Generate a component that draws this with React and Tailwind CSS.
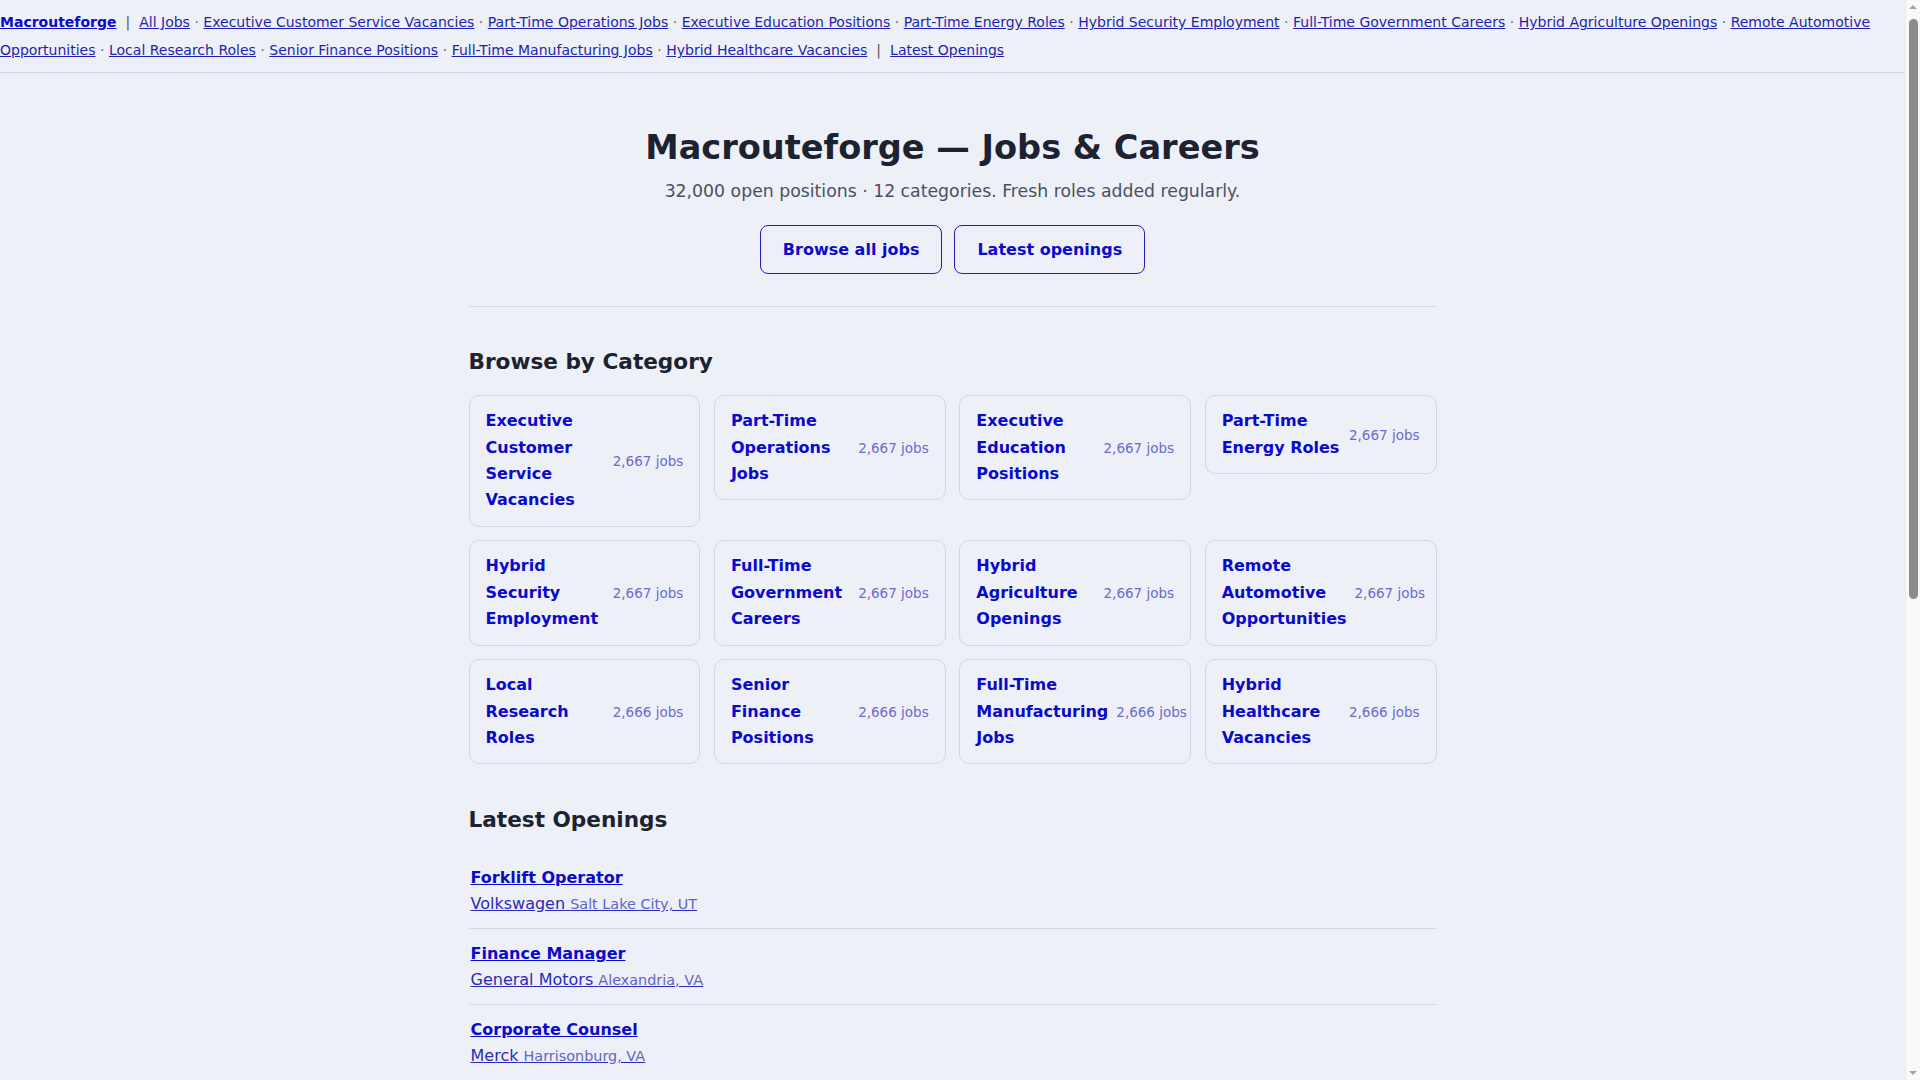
const CATEGORIES = [
  { name: "Executive Customer Service Vacancies", count: "2,667" },
  { name: "Part-Time Operations Jobs", count: "2,667" },
  { name: "Executive Education Positions", count: "2,667" },
  { name: "Part-Time Energy Roles", count: "2,667" },
  { name: "Hybrid Security Employment", count: "2,667" },
  { name: "Full-Time Government Careers", count: "2,667" },
  { name: "Hybrid Agriculture Openings", count: "2,667" },
  { name: "Remote Automotive Opportunities", count: "2,667" },
  { name: "Local Research Roles", count: "2,666" },
  { name: "Senior Finance Positions", count: "2,666" },
  { name: "Full-Time Manufacturing Jobs", count: "2,666" },
  { name: "Hybrid Healthcare Vacancies", count: "2,666" },
];

const JOBS = [
  { title: "Forklift Operator", company: "Volkswagen", place: "Salt Lake City, UT" },
  { title: "Finance Manager", company: "General Motors", place: "Alexandria, VA" },
  { title: "Corporate Counsel", company: "Merck", place: "Harrisonburg, VA" },
  { title: "Registered Nurse", company: "Kaiser Permanente", place: "Fresno, CA" },
  { title: "Data Analyst", company: "Deloitte", place: "Austin, TX" },
  { title: "Warehouse Associate", company: "Amazon", place: "Reno, NV" },
  { title: "HR Coordinator", company: "Pfizer", place: "Raleigh, NC" },
  { title: "Software Engineer", company: "Intel", place: "Hillsboro, OR" },
  { title: "Customer Service Representative", company: "Comcast", place: "Denver, CO" },
  { title: "Maintenance Technician", company: "Boeing", place: "Wichita, KS" },
];

const font = { fontFamily: '"DejaVu Sans", Verdana, sans-serif' };

// the reference was shot with a classic scrollbar showing
function FakeScrollbar() {
  return (
    <div className="fixed right-0 top-0 z-10 h-screen w-[15px] border-l border-[#ececec] bg-[#f9f9f9]">
      <div className="absolute left-[3px] top-[5px] h-0 w-0 border-x-[4px] border-b-[4px] border-x-transparent border-b-[#a3a3a3]" />
      <div className="absolute left-[3px] top-[19px] h-[580px] w-[9px] rounded-full bg-[#8c8c8c]" />
      <div className="absolute bottom-[5px] left-[3px] h-0 w-0 border-x-[4px] border-t-[4px] border-x-transparent border-t-[#a3a3a3]" />
    </div>
  );
}

export default function App() {
  return (
    <div className="min-h-screen bg-[#edf0f7] text-[#1c2230]" style={font}>
      <FakeScrollbar />
      <div className="mr-[15px]">
        <nav className="border-b border-[#d4d8e0] py-2 text-sm leading-7 text-[#1f1fb0]">
          <a href="#" className="font-bold text-[#0a0acc] underline">
            Macrouteforge
          </a>
          <span className="mx-[9px] text-[#555]">|</span>
          <a href="#" className="underline">All Jobs</a>
          {CATEGORIES.map((c) => (
            <span key={c.name}>
              <span className="mx-[4.5px] text-[#666]">·</span>
              <a href="#" className="underline">{c.name}</a>
            </span>
          ))}
          <span className="mx-[9px] text-[#555]">|</span>
          <a href="#" className="underline">Latest Openings</a>
        </nav>

        <main className="mx-auto max-w-[1000px] px-4">
          <section className="pb-8 pt-[55px] text-center">
            <h1 className="text-[33.6px] font-bold leading-[1.2] text-[#1c2230]">
              Macrouteforge — Jobs &amp; Careers
            </h1>
            <p className="mt-[11px] text-[17.3px] leading-[1.5] text-[#4a5060]">
              32,000 open positions · 12 categories. Fresh roles added regularly.
            </p>
            <div className="mt-[20px] flex justify-center gap-3">
              <a
                href="#"
                className="flex h-[49px] items-center rounded-lg border border-[#2020b8] px-[22px] font-bold text-[#0a0acc]"
              >
                Browse all jobs
              </a>
              <a
                href="#"
                className="flex h-[49px] items-center rounded-lg border border-[#2020b8] px-[22px] font-bold text-[#0a0acc]"
              >
                Latest openings
              </a>
            </div>
          </section>

          <div className="border-t border-[#d4d8e0]" />

          <section className="pt-[41px]">
            <h2 className="text-[21.6px] font-bold leading-[1.3]">Browse by Category</h2>
            <div className="mt-[19px] grid grid-cols-4 items-start gap-[13.6px]">
              {CATEGORIES.map((c) => (
                <a
                  key={c.name}
                  href="#"
                  className="flex items-center gap-2 rounded-[10px] border border-[#d2d6de] px-4 py-3"
                >
                  <span className="flex-1 text-base font-bold leading-[1.65] text-[#0a0acc]">
                    {c.name}
                  </span>
                  <span className="shrink-0 whitespace-nowrap text-[13.5px] text-[#6a6ad0]">
                    {c.count} jobs
                  </span>
                </a>
              ))}
            </div>
          </section>

          <section className="pb-16 pt-[42px]">
            <h2 className="text-[21.6px] font-bold leading-[1.3]">Latest Openings</h2>
            <ul className="mt-[19px]">
              {JOBS.map((j, i) => (
                <li
                  key={j.title}
                  className={`px-0.5 py-[12.5px] ${i > 0 ? "border-t border-[#d4d8e0]" : ""}`}
                >
                  <a href="#" className="block text-base font-bold leading-6 text-[#0a0acc] underline">
                    {j.title}
                  </a>
                  <a href="#" className="mt-[2px] inline-block leading-6 text-[#2a2ac0] underline">
                    {j.company}{" "}
                    <span className="text-[14.4px] text-[#6262c8]">{j.place}</span>
                  </a>
                </li>
              ))}
            </ul>
          </section>
        </main>

        <footer className="border-t border-[#d4d8e0] py-8 text-center text-sm text-[#555b68]">
          © Macrouteforge · All Jobs · Latest Openings
        </footer>
      </div>
    </div>
  );
}
